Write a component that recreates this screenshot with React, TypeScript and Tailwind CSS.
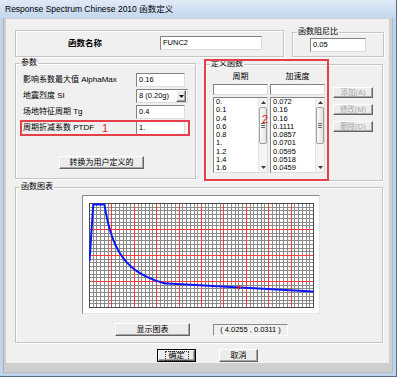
import React from "react";

const field =
  "bg-white border border-t-[#828282] border-l-[#828282] border-r-[#dcdcdc] border-b-[#dcdcdc]";
const raised =
  "bg-[#ececec] border border-t-white border-l-white border-r-[#646464] border-b-[#646464] shadow-[inset_-1px_-1px_0_#a6a6a6]";

const params = [
  { label: "影响系数最大值 AlphaMax", value: "0.16" },
  { label: "地震烈度 SI", value: "8 (0.20g)", select: true },
  { label: "场地特征周期 Tg", value: "0.4" },
  { label: "周期折减系数 PTDF", value: "1.", mark: true },
];

const periods = ["0.", "0.1", "0.4", "0.6", "0.8", "1.", "1.2", "1.4", "1.6"];
const accels = ["0.072", "0.16", "0.16", "0.1111", "0.0857", "0.0701", "0.0595", "0.0518", "0.0459"];

// GB50011-2010 spectrum, Tg = 0.4, damping 0.05
function sa(t: number) {
  const amax = 0.16;
  const tg = 0.4;
  if (t < 0.1) return amax * (0.45 + 0.55 * (t / 0.1));
  if (t <= tg) return amax;
  if (t <= 5 * tg) return Math.pow(tg / t, 0.9) * amax;
  return (Math.pow(0.2, 0.9) - 0.02 * (t - 5 * tg)) * amax;
}

function Group({
  label,
  className = "",
  children,
}: {
  label?: string;
  className?: string;
  children?: React.ReactNode;
}) {
  return (
    <div
      className={`relative border border-[#c4c4c4] shadow-[inset_1px_1px_0_#ffffff,1px_1px_0_#ffffff] ${className}`}
    >
      {label && (
        <span className="absolute left-[4px] top-[-6px] bg-[#f0f0f0] px-px text-[8px] leading-[10px] text-black">
          {label}
        </span>
      )}
      {children}
    </div>
  );
}

function ScrollBar() {
  return (
    <div className="flex w-[9px] flex-col items-center border-l border-[#e4e4e4] bg-[#f4f4f4]">
      <div className="flex h-[9px] items-center">
        <svg width="5" height="3">
          <path d="M0 3L2.5 0L5 3Z" fill="#3a3a3a" />
        </svg>
      </div>
      <div className="flex h-[37px] w-[8px] items-center justify-center rounded-[2px] border border-[#a0a0a0] bg-gradient-to-r from-[#fbfbfb] to-[#e2e2e2]">
        <svg width="4" height="5" shapeRendering="crispEdges">
          <path d="M0 0.5h4M0 2.5h4M0 4.5h4" stroke="#6a6a6a" />
        </svg>
      </div>
      <div className="flex-1" />
      <div className="flex h-[9px] items-center">
        <svg width="5" height="3">
          <path d="M0 0L2.5 3L5 0Z" fill="#3a3a3a" />
        </svg>
      </div>
    </div>
  );
}

function List({ items }: { items: string[] }) {
  return (
    <div className={`${field} flex h-[76px] w-[55px] overflow-hidden`}>
      <div className="flex-1 pl-[2px] text-[7.5px] leading-[8.25px]">
        {items.map((v, i) => (
          <div key={i}>{v}</div>
        ))}
      </div>
      <ScrollBar />
    </div>
  );
}

function Chart() {
  const W = 224;
  const H = 104;
  const minorX = Array.from({ length: 61 }, (_, i) => Math.round((i * W) / 60));
  const minorY = Array.from({ length: 29 }, (_, j) => Math.round((j * H) / 28));
  const majorX = Array.from({ length: 11 }, (_, i) => Math.round((i * W) / 10));
  const majorY = Array.from({ length: 5 }, (_, j) => Math.round((j * H) / 4));
  const hMinor = minorY.map((y) => `M0 ${y + 0.5}H${W + 1}`).join("");
  const vMinor = minorX.map((x) => `M${x + 0.5} 0V${H + 1}`).join("");
  const hMajor = majorY.map((y) => `M0 ${y + 0.5}H${W + 1}`).join("");
  const vMajor = majorX.map((x) => `M${x + 0.5} 0V${H + 1}`).join("");
  const pts: string[] = [];
  for (let i = 0; i <= 300; i++) {
    const t = i * 0.02;
    const x = 0.5 + (t / 6) * W;
    const y = 1.5 + ((0.16 - sa(t)) / 0.16) * 103;
    pts.push(`${x.toFixed(2)},${y.toFixed(2)}`);
  }
  return (
    <svg width={225} height={105} viewBox="0 0 225 105" className="block">
      <rect x={0} y={0} width={225} height={105} fill="#ffffff" />
      <path d={vMinor} stroke="#8a8a8a" strokeWidth={1} fill="none" shapeRendering="crispEdges" />
      <path d={hMinor} stroke="#8a8a8a" strokeWidth={1} fill="none" shapeRendering="crispEdges" />
      <path d={vMajor} stroke="#ff3a3a" strokeWidth={1} fill="none" shapeRendering="crispEdges" />
      <path d={hMajor} stroke="#ff3a3a" strokeWidth={1} fill="none" shapeRendering="crispEdges" />
      <rect x={0.5} y={0.5} width={W} height={H} fill="none" stroke="#4a4a4a" shapeRendering="crispEdges" />
      <polyline points={pts.join(" ")} fill="none" stroke="#0a16ff" strokeWidth={2} strokeLinejoin="round" />
      <path d="M148.5 84.5h4M150.5 82.5v4" stroke="#ff0000" strokeWidth={1.2} />
    </svg>
  );
}

export default function App() {
  return (
    <div className="h-[377px] w-[398px] bg-white font-['Liberation_Sans','Noto_Sans_CJK_SC',sans-serif] text-black">
      <div className="flex h-[377px] w-[397px] flex-col border-b border-r border-[#5b6b80] bg-[#bcd4ee]">
        {/* title bar */}
        <div className="flex h-[18px] items-center bg-gradient-to-b from-[#e0eaf6] to-[#c3d7ee] pl-[5px] text-[8.5px]">
          Response Spectrum Chinese 2010 函数定义
        </div>

        <div className="flex flex-1 px-[3px] pb-[3px]">
          <div className="flex flex-1 bg-[#cfcfcf] pb-[10px] pl-[3px] pr-[4px] pt-px shadow-[inset_1px_0_0_#b0b0b0,inset_-1px_-1px_0_#b8b8b8]">
            <div className="flex-1 bg-[#f0f0f0] pl-[9px] pt-[11px] text-[8px]">
              {/* name + damping */}
              <div className="flex items-end">
                <Group className="h-[27px] w-[269px]">
                  <div className="flex items-center pl-[52px] pt-[5px]">
                    <span className="w-[92px] text-[8.5px] font-bold leading-none">函数名称</span>
                    <div className={`${field} flex h-[14px] w-[102px] items-center pl-[2px] text-[7.5px]`}>FUNC2</div>
                  </div>
                </Group>
                <Group label="函数阻尼比" className="ml-[8px] h-[25px] w-[92px]">
                  <div className="pl-[17px] pt-[5px]">
                    <div className={`${field} flex h-[14px] w-[56px] items-center pl-[2px] text-[7.5px]`}>0.05</div>
                  </div>
                </Group>
              </div>

              {/* params + table */}
              <div className="mt-[6px] flex items-start">
                <Group label="参数" className="h-[116px] w-[181px]">
                  <div className="flex flex-col gap-[2px] pl-[7px] pt-[9px]">
                    {params.map((p) => (
                      <div key={p.label} className="relative flex h-[14px] items-center">
                        <span className="w-[113px] leading-none">{p.label}</span>
                        {p.select ? (
                          <div className={`${field} flex h-[14px] w-[52px] items-center pl-[2px] text-[7.5px]`}>
                            <span className="flex-1">{p.value}</span>
                            <div className={`${raised} mr-px flex h-[12px] w-[10px] items-center justify-center`}>
                              <svg width="5" height="3">
                                <path d="M0 0L2.5 3L5 0Z" fill="#111" />
                              </svg>
                            </div>
                          </div>
                        ) : (
                          <div className={`${field} flex h-[14px] w-[49px] items-center pl-[2px] text-[7.5px]`}>
                            {p.value}
                          </div>
                        )}
                        {p.mark && (
                          <>
                            <div className="absolute -bottom-px -left-[3px] -top-px right-[5px] border-2 border-[#e5404a]" />
                            <span className="absolute left-[79px] top-[1px] text-[11px] leading-[12px] text-[#e3232d]">1</span>
                          </>
                        )}
                      </div>
                    ))}
                  </div>
                  <div
                    className={`${raised} ml-[43px] mt-[21px] flex h-[13px] w-[85px] items-center justify-center leading-none`}
                  >
                    转换为用户定义的
                  </div>
                </Group>

                <Group label="定义函数" className="ml-[9px] mt-px h-[117px] w-[178px]">
                  <div className="flex pl-[7px] pt-[7px]">
                    <div className="w-[112px]">
                      <div className="flex gap-[2px] leading-[10px]">
                        <span className="w-[55px] text-center">周期</span>
                        <span className="w-[55px] text-center">加速度</span>
                      </div>
                      <div className="mt-[2px] flex gap-[2px]">
                        <div className={`${field} h-[11px] w-[55px]`} />
                        <div className={`${field} h-[11px] w-[55px]`} />
                      </div>
                      <div className="mt-[2px] flex gap-[2px]">
                        <List items={periods} />
                        <List items={accels} />
                      </div>
                    </div>
                    <div className="ml-[8px] flex flex-col gap-[6px] pt-[15px]">
                      {["添加(A)", "修改(M)", "删除(D)"].map((b) => (
                        <div
                          key={b}
                          className={`${raised} flex h-[11px] w-[40px] items-center justify-center text-[7.5px] leading-none text-[#a6a6a6]`}
                        >
                          {b}
                        </div>
                      ))}
                    </div>
                  </div>
                  <div className="absolute -left-[2px] -top-[6px] h-[122px] w-[125px] border-2 border-[#e5404a]" />
                  <span className="absolute left-[56px] top-[48px] text-[11px] leading-[12px] text-[#e3232d]">2</span>
                </Group>
              </div>

              {/* chart */}
              <Group label="函数图表" className="mt-[6px] h-[156px] w-[368px]">
                <div className="ml-[66px] mt-[7px] h-[119px] w-[238px] border border-b-[#e4e4e4] border-l-[#8a8a8a] border-r-[#e4e4e4] border-t-[#8a8a8a] bg-white pl-[6px] pt-[7px]">
                  <Chart />
                </div>
                <div className="ml-[99px] mt-[9px] flex items-center">
                  <div className={`${raised} flex h-[13px] w-[75px] items-center justify-center leading-none`}>显示图表</div>
                  <div className="ml-[23px] flex h-[12px] w-[75px] items-center justify-center border border-b-white border-l-[#8a8a8a] border-r-white border-t-[#8a8a8a] text-[7.5px] leading-none">
                    ( 4.0255 , 0.0311 )
                  </div>
                </div>
              </Group>

              {/* ok / cancel */}
              <div className="ml-[142px] mt-[6px] flex">
                <div className="h-[13px] w-[39px] border border-black">
                  <div className={`${raised} flex h-full w-full items-center justify-center`}>
                    <span className="border border-dotted border-[#333] px-[3px] leading-[8px]">确定</span>
                  </div>
                </div>
                <div className={`${raised} ml-[23px] flex h-[13px] w-[39px] items-center justify-center leading-none`}>
                  取消
                </div>
              </div>
            </div>
          </div>
        </div>
      </div>
    </div>
  );
}
